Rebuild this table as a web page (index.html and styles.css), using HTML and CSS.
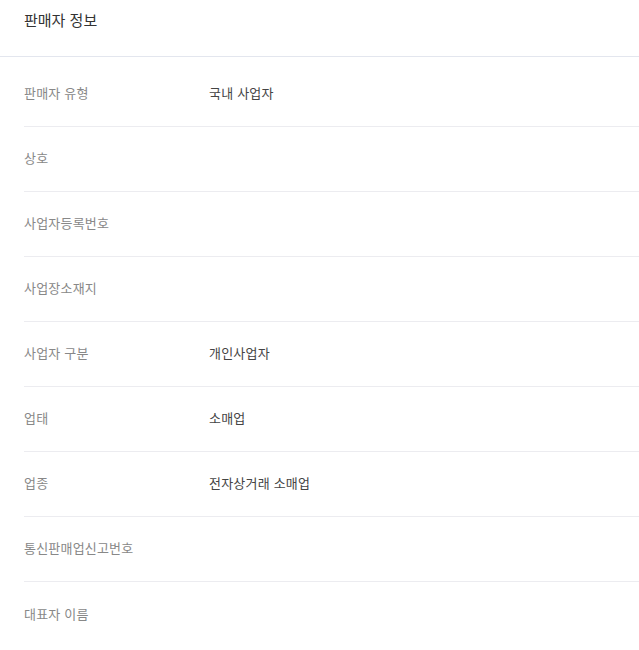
FILE: index.html
```html
<!DOCTYPE html>
<html lang="ko">
<head>
<meta charset="utf-8">
<link rel="stylesheet" href="styles.css">
</head>
<body>
<section class="panel">
  <h2 class="title">판매자 정보</h2>
  <dl class="list">
    <div class="row"><dt>판매자 유형</dt><dd>국내 사업자</dd></div>
    <div class="row"><dt>상호</dt><dd></dd></div>
    <div class="row"><dt>사업자등록번호</dt><dd></dd></div>
    <div class="row"><dt>사업장소재지</dt><dd></dd></div>
    <div class="row"><dt>사업자 구분</dt><dd>개인사업자</dd></div>
    <div class="row"><dt>업태</dt><dd>소매업</dd></div>
    <div class="row"><dt>업종</dt><dd>전자상거래 소매업</dd></div>
    <div class="row"><dt>통신판매업신고번호</dt><dd></dd></div>
    <div class="row"><dt>대표자 이름</dt><dd></dd></div>
  </dl>
</section>
</body>
</html>
```
FILE: styles.css
```css
html, body {
  margin: 0;
  padding: 0;
  background: #fff;
}
body {
  font-family: "Noto Sans CJK KR", "Noto Sans", sans-serif;
  color: #333;
}
.panel {
  width: 639px;
}
.title {
  margin: 0;
  padding: 10px 24px 26px;
  font-size: 15px;
  line-height: 20px;
  font-weight: 400;
  color: #333;
  border-bottom: 1px solid #e3e6ee;
}
.list {
  margin: 0;
  padding: 5px 0 0 24px;
}
.row {
  box-sizing: border-box;
  display: flex;
  align-items: center;
  height: 65px;
  padding-bottom: 2px;
  border-bottom: 1px solid #ececf0;
  font-size: 13px;
  line-height: 18px;
  letter-spacing: 0.2px;
}
.row:last-child {
  border-bottom: none;
}
.row dt {
  width: 185px;
  color: #888;
}
.row dd {
  margin: 0;
  color: #444;
}
```
